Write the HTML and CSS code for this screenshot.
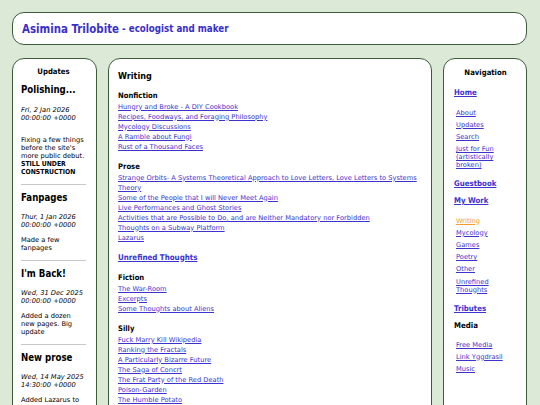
FILE: index.html
```html
<!DOCTYPE html>
<html lang="en">
<head>
    <meta charset="UTF-8">
    <meta name="viewport" content="width=device-width, initial-scale=1.0">
    <title>Asimina Trilobite - Writing</title>
    <link rel="stylesheet" href="styles.css">
</head>
<body>
    <div class="top">
        <a class="name" href="#">Asimina Trilobite</a><span class="tag">&nbsp;- ecologist and maker</span>
    </div>
    <div class="page">
        <div class="box side">
            <div class="box-title">Updates</div>
            <div class="post first">
                <h2>Polishing...</h2>
                <p class="date">Fri, 2 Jan 2026<br>00:00:00 +0000</p>
                <p class="text">Fixing a few things before the site's more public debut.</p>
                <p class="loud">STILL UNDER CONSTRUCTION</p>
            </div>
            <hr>
            <div class="post">
                <h2>Fanpages</h2>
                <p class="date">Thur, 1 Jan 2026<br>00:00:00 +0000</p>
                <p class="text">Made a few fanpages</p>
            </div>
            <hr>
            <div class="post">
                <h2>I'm Back!</h2>
                <p class="date">Wed, 31 Dec 2025<br>00:00:00 +0000</p>
                <p class="text">Added a dozen new pages. Big update</p>
            </div>
            <hr>
            <div class="post">
                <h2>New prose</h2>
                <p class="date">Wed, 14 May 2025<br>14:30:00 +0000</p>
                <p class="text">Added Lazarus to the prose section.</p>
            </div>
        </div>

        <div class="box main">
            <h1>Writing</h1>
            <h3>Nonfiction</h3>
            <ul>
                <li><a href="#">Hungry and Broke - A DIY Cookbook</a></li>
                <li><a href="#">Recipes, Foodways, and Foraging Philosophy</a></li>
                <li><a href="#">Mycology Discussions</a></li>
                <li><a href="#">A Ramble about Fungi</a></li>
                <li><a href="#">Rust of a Thousand Faces</a></li>
            </ul>
            <h3>Prose</h3>
            <ul>
                <li><a href="#">Strange Orbits- A Systems Theoretical Approach to Love Letters, Love Letters to Systems Theory</a></li>
                <li><a href="#">Some of the People that I will Never Meet Again</a></li>
                <li><a href="#">Live Performances and Ghost Stories</a></li>
                <li><a href="#">Activities that are Possible to Do, and are Neither Mandatory nor Forbidden</a></li>
                <li><a href="#">Thoughts on a Subway Platform</a></li>
                <li><a href="#">Lazarus</a></li>
            </ul>
            <h3><a href="#">Unrefined Thoughts</a></h3>
            <h3>Fiction</h3>
            <ul>
                <li><a href="#">The War-Room</a></li>
                <li><a href="#">Excerpts</a></li>
                <li><a href="#">Some Thoughts about Aliens</a></li>
            </ul>
            <h3>Silly</h3>
            <ul>
                <li><a href="#">Fuck Marry Kill Wikipedia</a></li>
                <li><a href="#">Ranking the Fractals</a></li>
                <li><a href="#">A Particularly Bizarre Future</a></li>
                <li><a href="#">The Saga of Concrt</a></li>
                <li><a href="#">The Frat Party of the Red Death</a></li>
                <li><a href="#">Poison-Garden</a></li>
                <li><a href="#">The Humble Potato</a></li>
                <li><a href="#">Bread Crumbs</a></li>
            </ul>
        </div>

        <div class="box nav">
            <div class="box-title">Navigation</div>
            <a class="big" href="#">Home</a>
            <ul class="sub">
                <li><a href="#">About</a></li>
                <li><a href="#">Updates</a></li>
                <li><a href="#">Search</a></li>
                <li><a href="#">Just for Fun (artistically broken)</a></li>
            </ul>
            <a class="big" href="#">Guestbook</a>
            <a class="big" href="#">My Work</a>
            <ul class="sub">
                <li><a class="here" href="#">Writing</a></li>
                <li><a href="#">Mycology</a></li>
                <li><a href="#">Games</a></li>
                <li><a href="#">Poetry</a></li>
                <li><a href="#">Other</a></li>
                <li><a href="#">Unrefined Thoughts</a></li>
            </ul>
            <a class="big" href="#">Tributes</a>
            <div class="big label">Media</div>
            <ul class="sub">
                <li><a href="#">Free Media</a></li>
                <li><a href="#">Link Yggdrasil</a></li>
                <li><a href="#">Music</a></li>
            </ul>
        </div>
    </div>
</body>
</html>
```

FILE: styles.css
```css
*{
    box-sizing: border-box;
}
body{
    margin: 0;
    padding: 12px 13px 0 12px;
    background: #dbe9d6;
    font-family: "DejaVu Sans", sans-serif;
    font-size: 6.7px;
    color: #000;
}
a{
    color: #3b33cc;
}
h1, h2, h3, .box-title, .big, .loud, .top{
    font-family: "DejaVu Sans Condensed", "DejaVu Sans", sans-serif;
    font-stretch: condensed;
    font-weight: bold;
}
.top{
    height: 33px;
    display: flex;
    align-items: center;
    padding-left: 9px;
    background: #fff;
    border: 1.5px solid #3c5c3c;
    border-radius: 12px;
    color: #3b2fc9;
}
.name{
    font-size: 11.4px;
    text-decoration: none;
    color: #3b2fc9;
}
.tag{
    font-size: 9.7px;
}
.page{
    display: grid;
    grid-template-columns: 85px 1fr 84px;
    gap: 11px;
    margin-top: 13px;
    height: 420px;
}
.box{
    background: #fff;
    border: 1.5px solid #3c5c3c;
    border-radius: 12px;
    overflow: hidden;
}
.box-title{
    font-size: 7.7px;
    line-height: 8px;
    text-align: center;
}
p{
    margin: 0;
    line-height: 8px;
}

/* updates column */
.side{
    padding: 9px 10px 0 8px;
}
.post h2{
    margin: 7.5px 0 0;
    font-size: 9.6px;
    line-height: 12px;
}
.first h2{
    margin-top: 8px;
}
.date{
    margin-top: 9px;
    font-style: italic;
    white-space: nowrap;
}
.text{
    margin-top: 7px;
}
.first .date{
    margin-top: 10px;
}
.first .text{
    margin-top: 14px;
}
.loud{
    font-size: 6.8px;
}
hr{
    margin: 7.5px 0 0;
    border: 0;
    border-top: 1px solid #c8c8c8;
}

/* writing column */
.main{
    padding: 11.5px 9px 0;
}
h1{
    margin: 0 0 2px;
    font-size: 9px;
    line-height: 10px;
}
h3{
    margin: 10px 0 0;
    font-size: 7.6px;
    line-height: 10px;
}
h3 a{
    font-size: 7.9px;
}
.main ul{
    margin: 1px 0 0;
    padding: 0;
}
.main li{
    line-height: 10px;
}

/* navigation column */
.nav{
    padding: 9.5px 9px 0 10px;
}
.big{
    display: block;
    margin-top: 8px;
    font-size: 7.8px;
    line-height: 9px;
}
.nav .box-title + .big{
    margin-top: 11.5px;
}
.sub + .big{
    margin-top: 10px;
}
.label{
    color: #000;
}
.sub{
    list-style: none;
    margin: 11.5px 0 0;
    padding: 0 0 0 2px;
}
.label + .sub{
    margin-top: 11px;
}
.sub li{
    line-height: 8px;
    margin-top: 4.2px;
}
.sub li:first-child{
    margin-top: 0;
}
.here{
    color: #f0a030;
}
```
